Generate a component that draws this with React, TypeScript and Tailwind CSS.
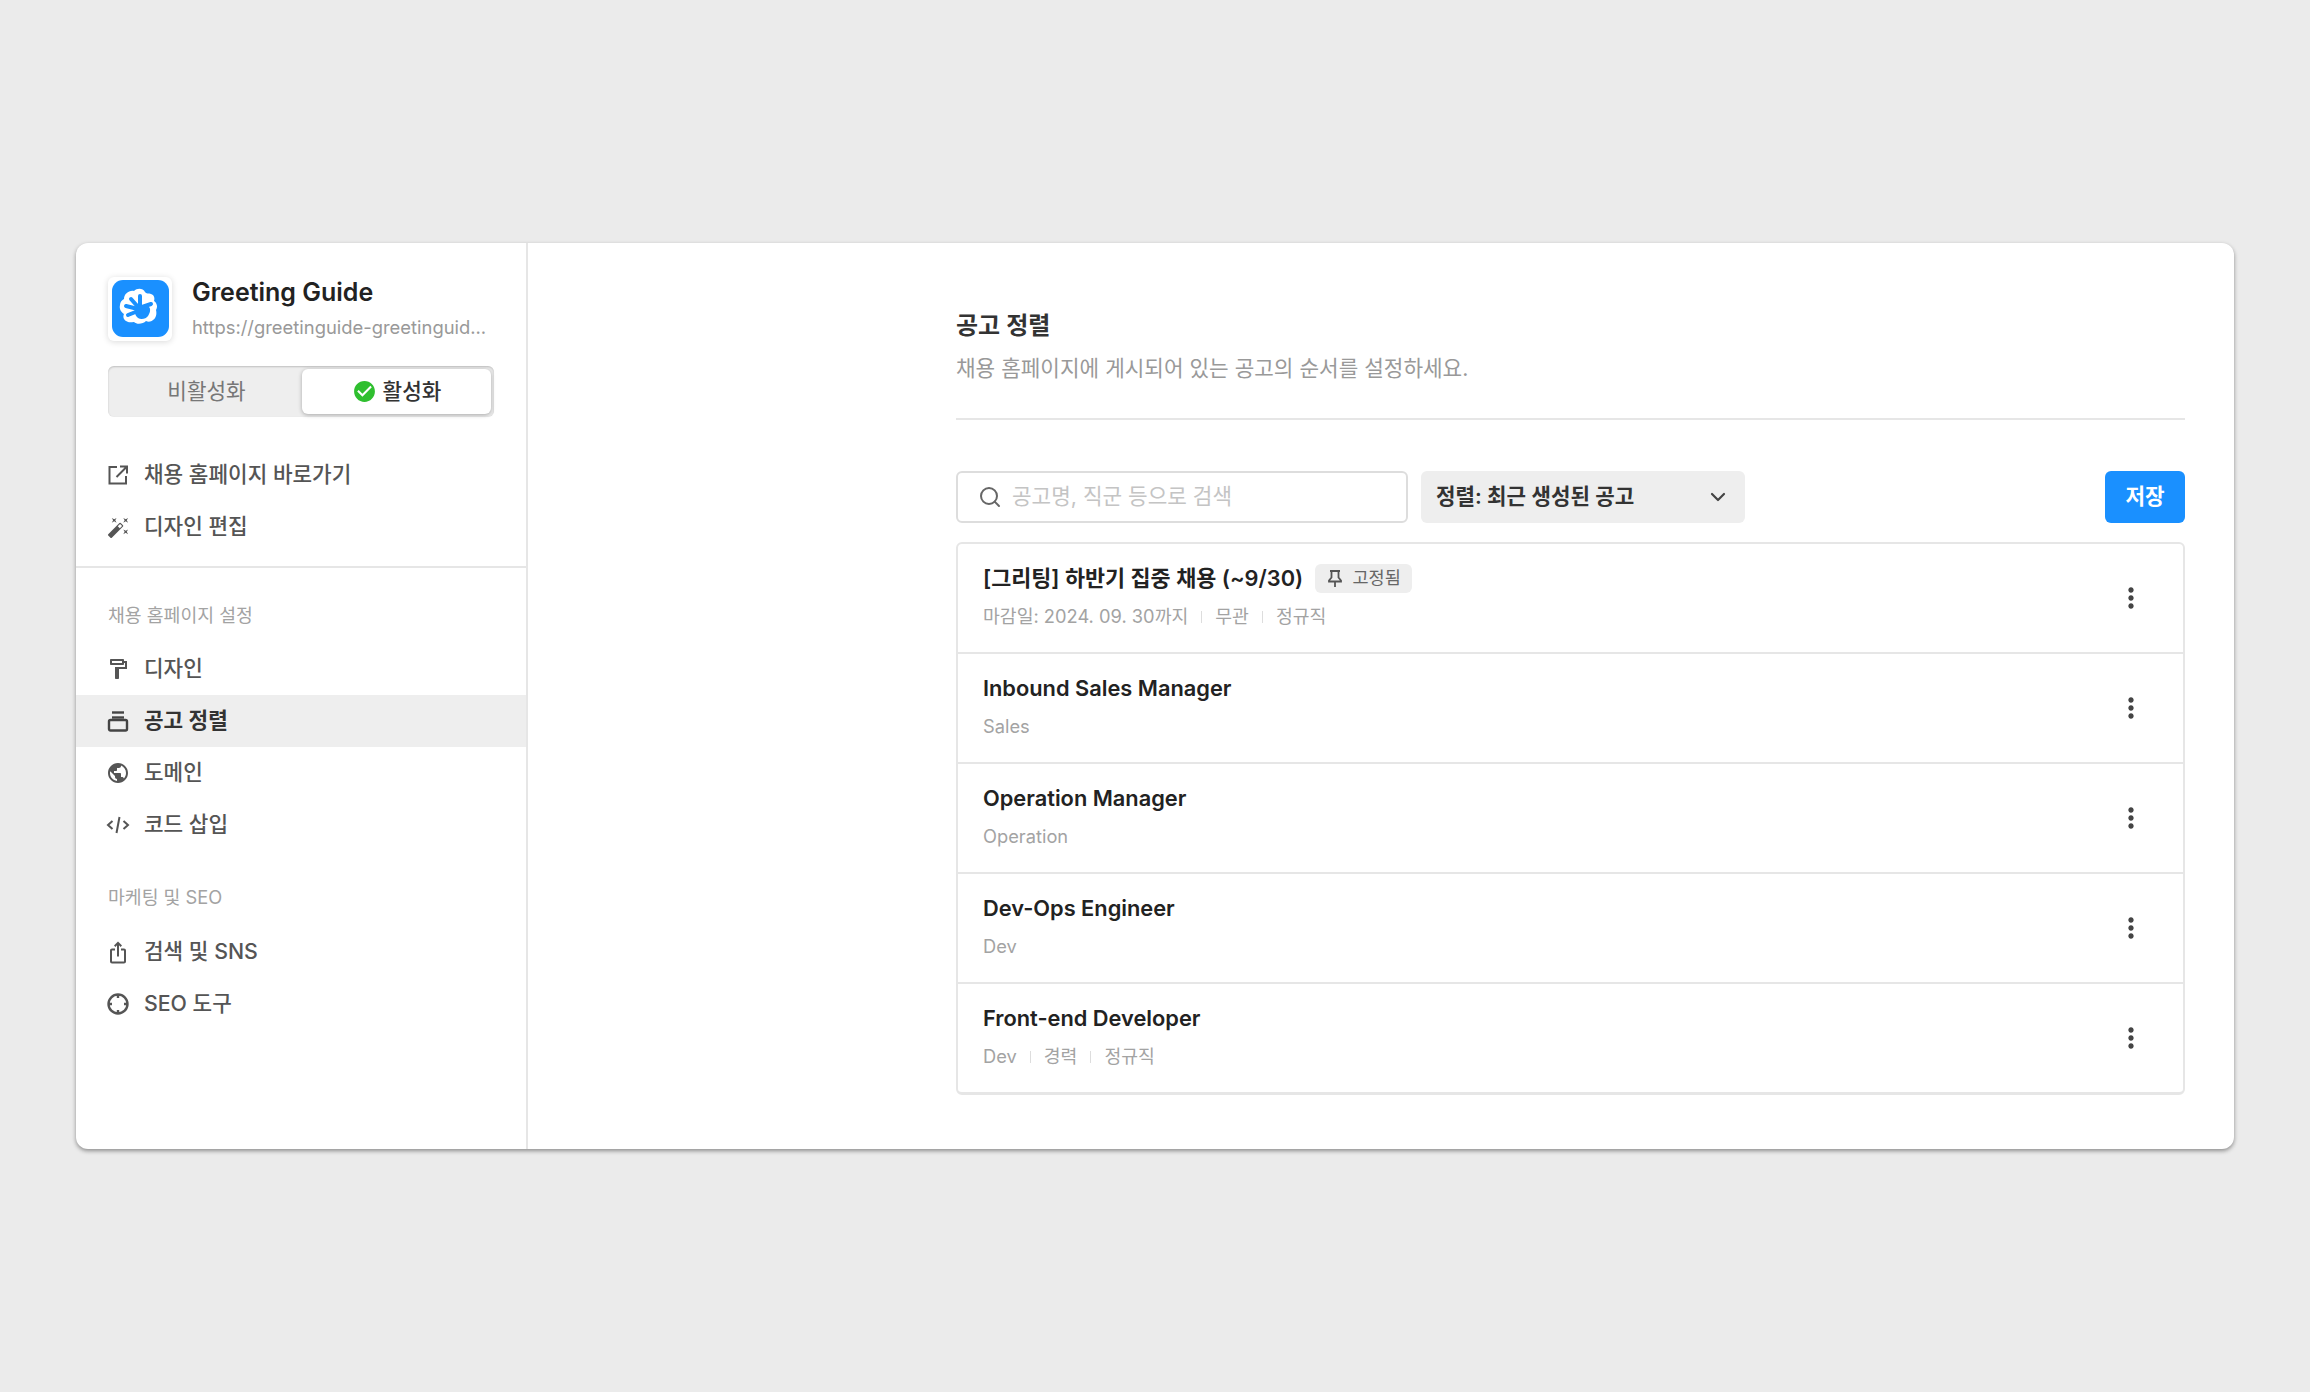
import React from "react";
import { ChevronDown, Search } from "lucide-react";
import { MdAutoFixHigh, MdOutlineFormatPaint, MdPublic, MdIosShare, MdMoreVert, MdCheckCircle } from "react-icons/md";

const FONT = "font-['Inter','Noto_Sans_CJK_KR','Noto_Sans',sans-serif]";

function Logo() {
  return (
    <div className="w-16 h-16 shrink-0 rounded-md bg-white shadow-[0_1px_6px_rgba(0,0,0,0.15)] flex items-center justify-center">
      <svg width="57" height="57" viewBox="0 0 57 57">
        <rect width="57" height="57" rx="11" fill="#1a90ff" />
        <path d="M22 11c3-3 9-3 11 1 1 2 4 1 6 2 3 1 4 4 3 7 3 2 4 6 2 9 1 4 0 8-3 10-2 2-5 2-7 1-3 3-9 4-12 1-3 0-5 1-8-1-3-2-3-5-2-7-3-2-5-5-4-9 0-3 2-5 4-6 0-5 5-9 10-8z" fill="#fff" />
        <g stroke="#1a90ff" strokeWidth="4" strokeLinecap="round" fill="none">
          <path d="M28 28 28 16" />
          <path d="M27 28 19 19" />
          <path d="M26 29 14 26" />
          <path d="M26 31 16 35" />
          <path d="M30 27 39 24" />
        </g>
        <path d="M23 27h14c2 2 1 6-1 9-2 3-7 4-10 2-3-2-4-7-3-11z" fill="#1a90ff" />
      </svg>
    </div>
  );
}

function ExternalIcon() {
  return (
    <svg width="22" height="22" viewBox="0 0 22 22" fill="none" stroke="#555" strokeWidth="2">
      <path d="M10 3H2.500v16.500H19V12" />
      <path d="M13 2.500h7v7M20 2.500 9.500 13" />
    </svg>
  );
}
function ListIcon() {
  return (
    <svg width="22" height="24" viewBox="0 0 22 24" fill="none" stroke="#444" strokeWidth="2.4">
      <path d="M5 3.500h12" />
      <path d="M5 8.500h12" />
      <rect x="2" y="11" width="18" height="10.500" rx="1.500" />
    </svg>
  );
}
function CodeIcon() {
  return (
    <svg width="24" height="22" viewBox="0 0 24 22" fill="none" stroke="#555" strokeWidth="2">
      <path d="M6.500 7 2 11l4.500 4M17.500 7 22 11l-4.500 4M13.500 3l-3 16" />
    </svg>
  );
}
function SeoIcon() {
  return (
    <svg width="24" height="24" viewBox="0 0 24 24" fill="none" stroke="#555" strokeWidth="2.4">
      <circle cx="12" cy="12" r="9.500" />
      <path d="M12 2v4M12 18v4M2 12h4M18 12h4" />
    </svg>
  );
}
function PinIcon() {
  return (
    <svg width="18" height="20" viewBox="0 0 18 20" fill="none" stroke="#555" strokeWidth="1.800">
      <path d="M4 2h10M5.500 2v6.500L3 11.500v1h12v-1l-2.500-3V2M9 12.500V18" />
    </svg>
  );
}

function NavRow({ icon, label, active }: { icon: React.ReactNode; label: string; active?: boolean }) {
  return (
    <div className={`flex items-center h-[52px] pl-[30px] ${active ? "bg-[#eeeeee] text-[#333] font-semibold" : "text-[#555] font-medium"}`}>
      <span className="w-6 h-6 flex items-center justify-center shrink-0 text-[#555]">{icon}</span>
      <span className="ml-[14px] text-[21.300px] leading-none">{label}</span>
    </div>
  );
}

function Sep() {
  return <span className="w-px h-3 bg-[#dddddd] mx-[13px]" />;
}

function JobRow({ title, meta, pinned, last }: { title: string; meta: string[]; pinned?: boolean; last?: boolean }) {
  return (
    <div className={`flex items-center justify-between pl-[25px] pr-[36px] ${last ? "h-[108px]" : "h-[110px] border-b-2 border-[#e6e6e6]"}`}>
      <div className="flex flex-col pb-[6px]">
        <div className="flex items-center h-[30px]">
          <span className="text-[21.800px] font-semibold text-[#222] leading-none">{title}</span>
          {pinned && (
            <span className="ml-3 w-[97px] h-[29px] rounded-md bg-[#eeeeee] flex items-center justify-center text-[17.500px] text-[#666]">
              <PinIcon />
              <span className="ml-2">고정됨</span>
            </span>
          )}
        </div>
        <div className="flex items-center mt-[13px] h-[20px] text-[18.300px] text-[#a3a3a3] leading-none">
          {meta.map((m, i) => (
            <React.Fragment key={m}>
              {i > 0 && <Sep />}
              <span>{m}</span>
            </React.Fragment>
          ))}
        </div>
      </div>
      <MdMoreVert size={32} className="text-[#444]" />
    </div>
  );
}

export default function App() {
  return (
    <div className={`h-[1392px] bg-[#ebebeb] flex items-center justify-center ${FONT}`}>
      <div className="w-[2158px] h-[906px] bg-white rounded-xl shadow-[0_2px_4px_rgba(0,0,0,0.4)] flex overflow-hidden">
        <aside className="w-[452px] shrink-0 border-r-2 border-[#e6e6e6] flex flex-col">
          <div className="pt-[33px] px-8 pb-0">
            <div className="flex items-center">
              <Logo />
              <div className="ml-5 min-w-0">
                <div className="text-[25px] font-semibold text-[#222] leading-[32px]">Greeting Guide</div>
                <div className="text-[18.400px] text-[#999] leading-[28px] mt-[5px] whitespace-nowrap">https://greetinguide-greetinguid...</div>
              </div>
            </div>
            <div className="mt-[25px] h-[51px] w-[386px] rounded-md bg-[#eeeeee] flex p-[3px] shadow-[inset_0_1px_2px_rgba(0,0,0,0.2)]">
              <div className="w-[191px] flex items-center justify-center text-[21.300px] text-[#777]">비활성화</div>
              <div className="flex-1 bg-white rounded-md shadow-[0_1px_4px_rgba(0,0,0,0.3)] flex items-center justify-center text-[21.300px] font-medium text-[#333]">
                <MdCheckCircle size={25} className="text-[#2fbf2f] mr-[6px]" />
                활성화
              </div>
            </div>
          </div>
          <div className="mt-[32px] pb-[13px] border-b-2 border-[#e6e6e6]">
            <NavRow icon={<ExternalIcon />} label="채용 홈페이지 바로가기" />
            <NavRow icon={<MdAutoFixHigh size={23} />} label="디자인 편집" />
          </div>
          <div className="mt-[31px] pl-8 h-[34px] flex items-center text-[18.300px] text-[#a3a3a3]">채용 홈페이지 설정</div>
          <div className="mt-[10px]">
            <NavRow icon={<MdOutlineFormatPaint size={26} />} label="디자인" />
            <NavRow icon={<ListIcon />} label="공고 정렬" active />
            <NavRow icon={<MdPublic size={26} />} label="도메인" />
            <NavRow icon={<CodeIcon />} label="코드 삽입" />
          </div>
          <div className="mt-[30px] pl-8 h-[34px] flex items-center text-[18.300px] text-[#a3a3a3]">마케팅 및 SEO</div>
          <div className="mt-[11px]">
            <NavRow icon={<MdIosShare size={25} />} label="검색 및 SNS" />
            <NavRow icon={<SeoIcon />} label="SEO 도구" />
          </div>
        </aside>
        <main className="flex-1 pl-[428px] pr-[49px]">
          <h1 className="mt-[67px] text-[24px] font-semibold text-[#333] leading-[32px]">공고 정렬</h1>
          <p className="mt-[10px] text-[21.300px] text-[#999] leading-[32px]">채용 홈페이지에 게시되어 있는 공고의 순서를 설정하세요.</p>
          <div className="mt-[34px] border-t-2 border-[#e6e6e6]" />
          <div className="mt-[51px] flex items-center h-[52px]">
            <div className="w-[452px] h-[52px] rounded-md border-2 border-[#dddddd] flex items-center pl-[20px]">
              <Search size={24} strokeWidth={2} className="text-[#666]" />
              <span className="ml-[10px] text-[21.300px] text-[#c4c4c4]">공고명, 직군 등으로 검색</span>
            </div>
            <div className="ml-[13px] w-[324px] h-[52px] rounded-md bg-[#eeeeee] flex items-center justify-between pl-[15px] pr-[15px]">
              <span className="text-[21.200px] font-semibold text-[#333]">정렬: 최근 생성된 공고</span>
              <ChevronDown size={24} strokeWidth={2.200} className="text-[#444]" />
            </div>
            <button className="ml-auto w-[80px] h-[52px] rounded-md bg-[#1a90ff] text-white text-[21.300px] font-semibold">저장</button>
          </div>
          <div className="mt-[19px] rounded-md border-2 border-[#e6e6e6] border-b-[3px]">
            <JobRow title="[그리팅] 하반기 집중 채용 (~9/30)" meta={["마감일: 2024. 09. 30까지", "무관", "정규직"]} pinned />
            <JobRow title="Inbound Sales Manager" meta={["Sales"]} />
            <JobRow title="Operation Manager" meta={["Operation"]} />
            <JobRow title="Dev-Ops Engineer" meta={["Dev"]} />
            <JobRow title="Front-end Developer" meta={["Dev", "경력", "정규직"]} last />
          </div>
        </main>
      </div>
    </div>
  );
}
